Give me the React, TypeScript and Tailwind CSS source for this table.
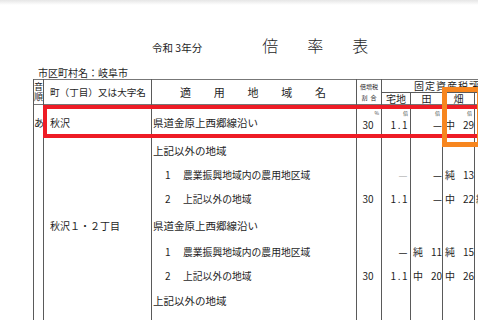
import React from 'react';

type Row = {
  h: string;
  on?: string;
  town?: string;
  num?: string;
  area?: string;
  pct?: string;
  taku?: string;
  takuLight?: boolean;
  ta?: [string, string];
  hata?: [string, string];
  next?: string;
  units?: boolean;
};

const rows: Row[] = [
  { h: 'h-[34px]', on: 'あ', town: '秋沢', area: '県道金原上西郷線沿い', pct: '30', taku: '1.1', ta: ['', '—'], hata: ['中', '29'], units: true },
  { h: 'h-[25px]', area: '上記以外の地域' },
  { h: 'h-[23px]', num: '1', area: '農業振興地域内の農用地区域', taku: '—', takuLight: true, ta: ['', '—'], hata: ['純', '13'] },
  { h: 'h-[25px]', num: '2', area: '上記以外の地域', pct: '30', taku: '1.1', ta: ['', '—'], hata: ['中', '22'], next: '純' },
  { h: 'h-[28px]', town: '秋沢１・２丁目', area: '県道金原上西郷線沿い' },
  { h: 'h-[24px]', num: '1', area: '農業振興地域内の農用地区域', taku: '—', ta: ['純', '11'], hata: ['純', '15'] },
  { h: 'h-[24px]', num: '2', area: '上記以外の地域', pct: '30', taku: '1.1', ta: ['中', '20'], hata: ['中', '26'] },
  { h: 'h-[26px]', area: '上記以外の地域' },
  { h: 'h-[26px]' },
];

const line = 'border-x border-[#5a5a5a] p-0';

const Unit = ({ show, text }: { show?: boolean; text: string }) =>
  show ? <div className="text-[5px] leading-[8px] text-right pr-[2px] text-[#444]">{text}</div> : null;

const App = () => {
  return (
    <div className="w-[478px] h-[320px] overflow-hidden relative bg-white text-[#1e1e1e] font-['Noto_Sans_CJK_JP',sans-serif]">
      <div className="absolute top-0 left-0 right-0 h-[5px] bg-gradient-to-b from-[#e6e6e6] to-white" />

      <div className="flex items-baseline pt-[36px] h-[67px]">
        <span className="ml-[152px] text-[10.5px] leading-[18px]">令和 3年分</span>
        <span className="ml-[60px] text-[16px] leading-[18px] tracking-[29px] font-light">倍率表</span>
      </div>
      <div className="h-[12px] leading-[12px] text-[10px] pl-[38px]">市区町村名：岐阜市</div>

      <table className="ml-[33px] table-fixed border-collapse w-[487px] text-[10.5px]">
        <colgroup>
          <col className="w-[10px]" />
          <col className="w-[108px]" />
          <col className="w-[205px]" />
          <col className="w-[25px]" />
          <col className="w-[29px]" />
          <col className="w-[32px]" />
          <col className="w-[32px]" />
          <col className="w-[46px]" />
        </colgroup>
        <thead>
          <tr className="h-[13px] border-t border-[#777]">
            <td rowSpan={2} className={`${line} text-[9px] leading-[10px] text-center`}>
              <div>音</div>
              <div>順</div>
            </td>
            <td rowSpan={2} className={`${line} text-[9.6px] leading-[12px] pl-[6px] whitespace-nowrap`}>町（丁目）又は大字名</td>
            <td rowSpan={2} className={`${line} text-[11px] leading-[12px]`}>
              <div className="flex justify-between pl-[28px] pr-[30px]">
                <span>適</span>
                <span>用</span>
                <span>地</span>
                <span>域</span>
                <span>名</span>
              </div>
            </td>
            <td rowSpan={2} className={`${line} text-[6px] leading-[11px] text-center whitespace-nowrap overflow-hidden`}>
              <div>倍増税</div>
              <div className="tracking-[3px] pl-[3px]">割合</div>
            </td>
            <td colSpan={4} className={`${line} border-b text-[10px] leading-[12px] pl-[32px] whitespace-nowrap tracking-[1px] overflow-hidden`}>固定資産税評価額</td>
          </tr>
          <tr className="h-[11px] border-b border-[#777]">
            <td className={`${line} text-[10px] leading-[11px] text-center`}>宅地</td>
            <td className={`${line} text-[10px] leading-[11px] text-center`}>田</td>
            <td className={`${line} text-[10px] leading-[11px] text-center`}>畑</td>
            <td className={`${line} text-[10px] leading-[11px] text-center`}>山林</td>
          </tr>
        </thead>
        <tbody>
          {rows.map((r, i) => {
            const va = r.units ? 'align-top pt-[4px]' : 'align-middle';
            const pad = r.units ? 'pt-[6px]' : '';
            return (
              <tr key={i} className={r.h}>
                <td className={`${line} ${va} text-[10px] leading-[16px] text-center`}>
                  <div className={pad}>{r.on}</div>
                </td>
                <td className={`${line} ${va} text-[10px] leading-[16px] pl-[6px] whitespace-nowrap`}>
                  <div className={pad}>{r.town}</div>
                </td>
                <td className={`${line} ${va} leading-[16px] whitespace-nowrap`}>
                  <div className={`${pad} flex`}>
                    {r.num && <span className="w-[31px] pl-[13px] text-[10px]">{r.num}</span>}
                    <span className={r.num ? 'text-[9.8px]' : 'pl-[1px]'}>{r.area}</span>
                  </div>
                </td>
                <td className={`${line} ${va} text-[10px] text-center`}>
                  <Unit show={r.units} text="%" />
                  <div className="leading-[16px] pr-[2px]">{r.pct}</div>
                </td>
                <td className={`${line} ${va} text-[10px] text-right`}>
                  <Unit show={r.units} text="倍" />
                  <div className={`leading-[16px] pr-[1px] tracking-[1.5px] ${r.takuLight ? 'text-[#bbb]' : ''}`}>{r.taku}</div>
                </td>
                <td className={`${line} ${va} text-[10px]`}>
                  <Unit show={r.units} text="倍" />
                  {r.ta && (
                    <div className="leading-[16px] flex justify-between pl-[2px]">
                      <span>{r.ta[0]}</span>
                      <span>{r.ta[1]}</span>
                    </div>
                  )}
                </td>
                <td className={`${line} ${va} text-[10px]`}>
                  <Unit show={r.units} text="倍" />
                  {r.hata && (
                    <div className="leading-[16px] flex justify-between pl-[2px]">
                      <span>{r.hata[0]}</span>
                      <span>{r.hata[1]}</span>
                    </div>
                  )}
                </td>
                <td className={`${line} ${va} text-[10px]`}>
                  <div className="leading-[16px] pl-[1px]">{r.next}</div>
                </td>
              </tr>
            );
          })}
        </tbody>
      </table>

      <div className="absolute left-[43px] top-[105px] w-[440px] h-[33px] border-[4px] border-[#ee1c25]" />
      <div className="absolute left-[442px] top-[87px] w-[40px] h-[60px] border-[5px] border-[#f7861f]" />
    </div>
  );
};

export default App;
